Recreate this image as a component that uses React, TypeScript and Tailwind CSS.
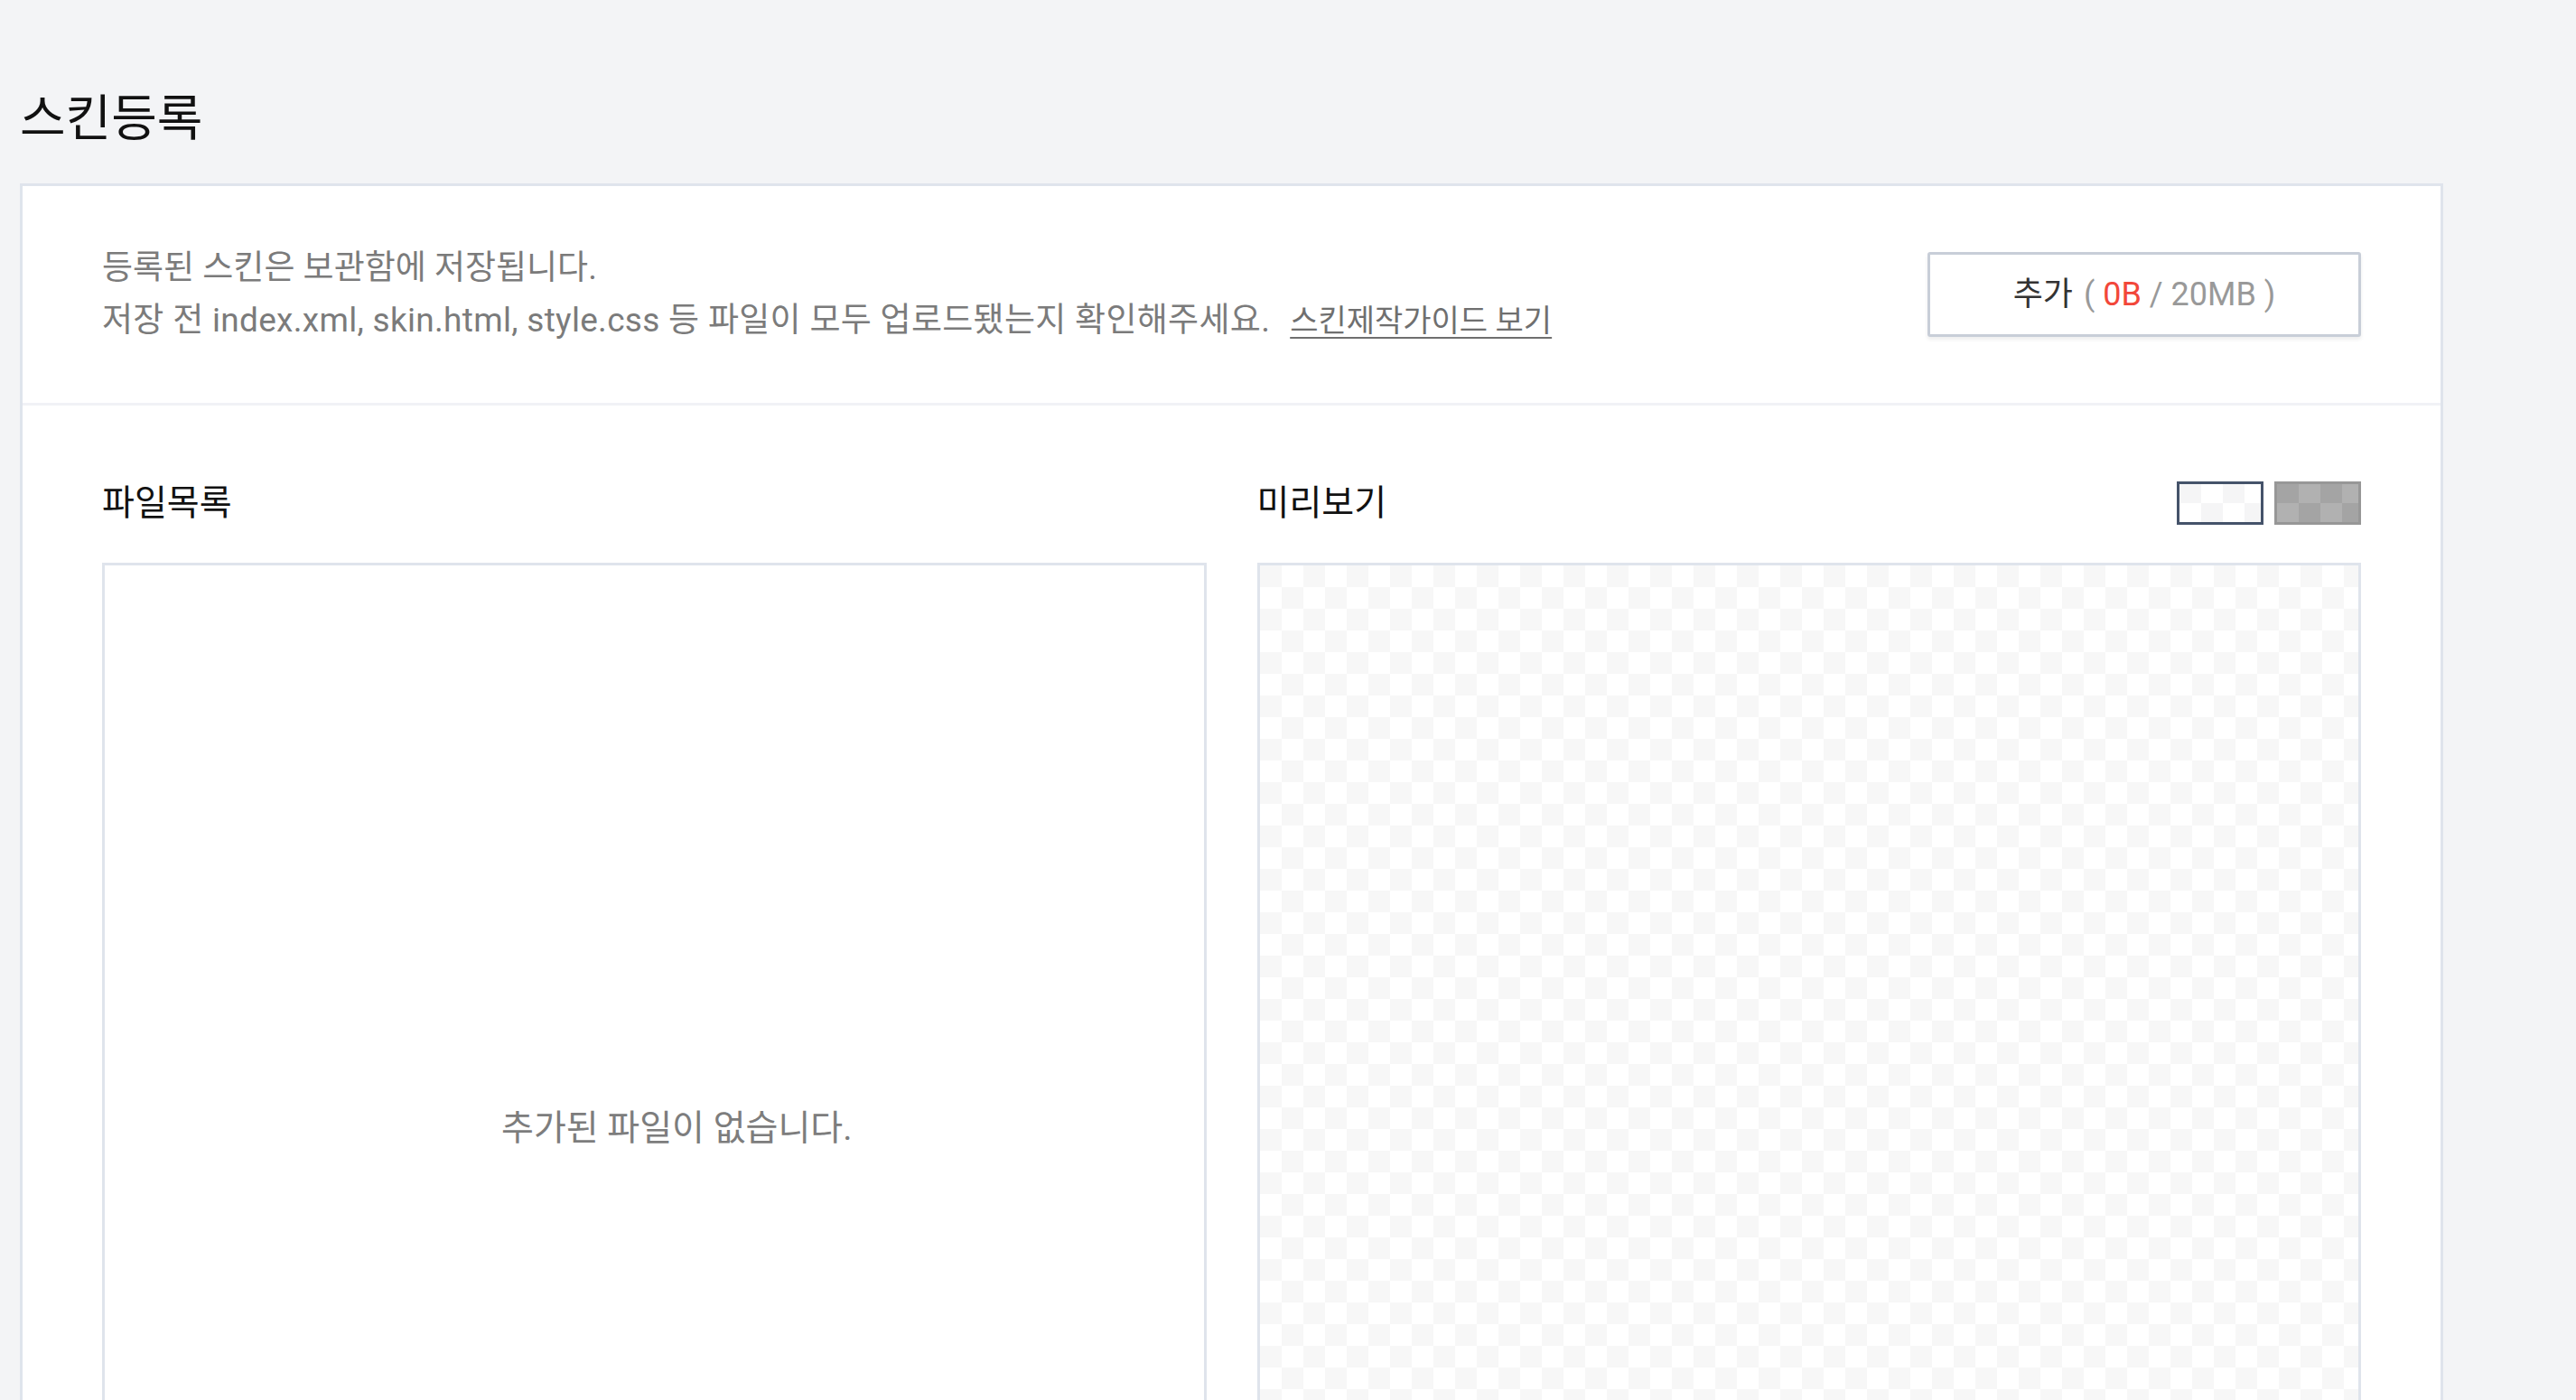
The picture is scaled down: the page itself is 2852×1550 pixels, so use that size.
import React from "react";

const font = "font-['Roboto','Noto_Sans_CJK_KR',sans-serif]";

function Swatch({ dark }: { dark?: boolean }) {
  return (
    <div
      className={
        dark
          ? "w-[96px] h-[48px] border-[3px] border-[#979797] bg-[conic-gradient(#b1b1b1_25%,#a4a4a4_0_50%,#b1b1b1_0_75%,#a4a4a4_0)] bg-[length:48px_42px]"
          : "w-[96px] h-[48px] border-[3px] border-[#45536a] bg-[conic-gradient(#fff_25%,#f5f5f6_0_50%,#fff_0_75%,#f5f5f6_0)] bg-[length:48px_42px]"
      }
    />
  );
}

export default function App() {
  return (
    <div className={`min-h-screen bg-[#f3f4f6] pl-[22px] pr-[147px] ${font}`}>
      {/* Title */}
      <h1 className="pt-[104px] text-[55px] leading-none text-[#111] h-[152px]">스킨등록</h1>

      <div className="mt-[51px] border-[3px] border-[#dfe4ec] bg-white">
        {/* Header */}
        <div className="flex items-center justify-between px-[88px] py-[62px] border-b-[3px] border-[#f1f2f6]">
          <div className="text-[37px] leading-[58px] text-[#7b7b7b]">
            <p>등록된 스킨은 보관함에 저장됩니다.</p>
            <p>
              <span className="tracking-[0.3px]">
                저장 전 index.xml, skin.html, style.css 등 파일이 모두 업로드됐는지 확인해주세요.
              </span>
              <a className="ml-[22px] text-[34px] underline underline-offset-[6px] decoration-[2px] text-[#6f6f6f]">
                스킨제작가이드 보기
              </a>
            </p>
          </div>
          <button className="w-[480px] h-[94px] border-[3px] border-[#c8ced8] rounded-[3px] bg-white shadow-[0_3px_4px_rgba(0,0,0,0.07)] text-[36px] flex items-center justify-center gap-[12px]">
            <span className="text-[#333]">추가</span>
            <span className="text-[#999]">
              ( <span className="text-[#f2473a]">0B</span> / 20MB )
            </span>
          </button>
        </div>

        {/* Body */}
        <div className="grid grid-cols-2 gap-[56px] px-[88px] pt-[84px]">
          <div>
            <div className="h-[48px] flex items-center">
              <h2 className="text-[39px] text-[#111]">파일목록</h2>
            </div>
            <div className="mt-[42px] h-[1252px] border-[3px] border-[#dfe4ec] flex items-center justify-center pl-[50px]">
              <p className="text-[39px] text-[#7d7d7d]">추가된 파일이 없습니다.</p>
            </div>
          </div>
          <div>
            <div className="h-[48px] flex items-center justify-between">
              <h2 className="text-[39px] text-[#111]">미리보기</h2>
              <div className="flex gap-[12px]">
                <Swatch />
                <Swatch dark />
              </div>
            </div>
            <div className="mt-[42px] h-[1252px] border-[3px] border-[#dfe4ec] bg-[conic-gradient(#fff_25%,#f7f7f7_0_50%,#fff_0_75%,#f7f7f7_0)] bg-[length:48px_48px]" />
          </div>
        </div>
      </div>
    </div>
  );
}
